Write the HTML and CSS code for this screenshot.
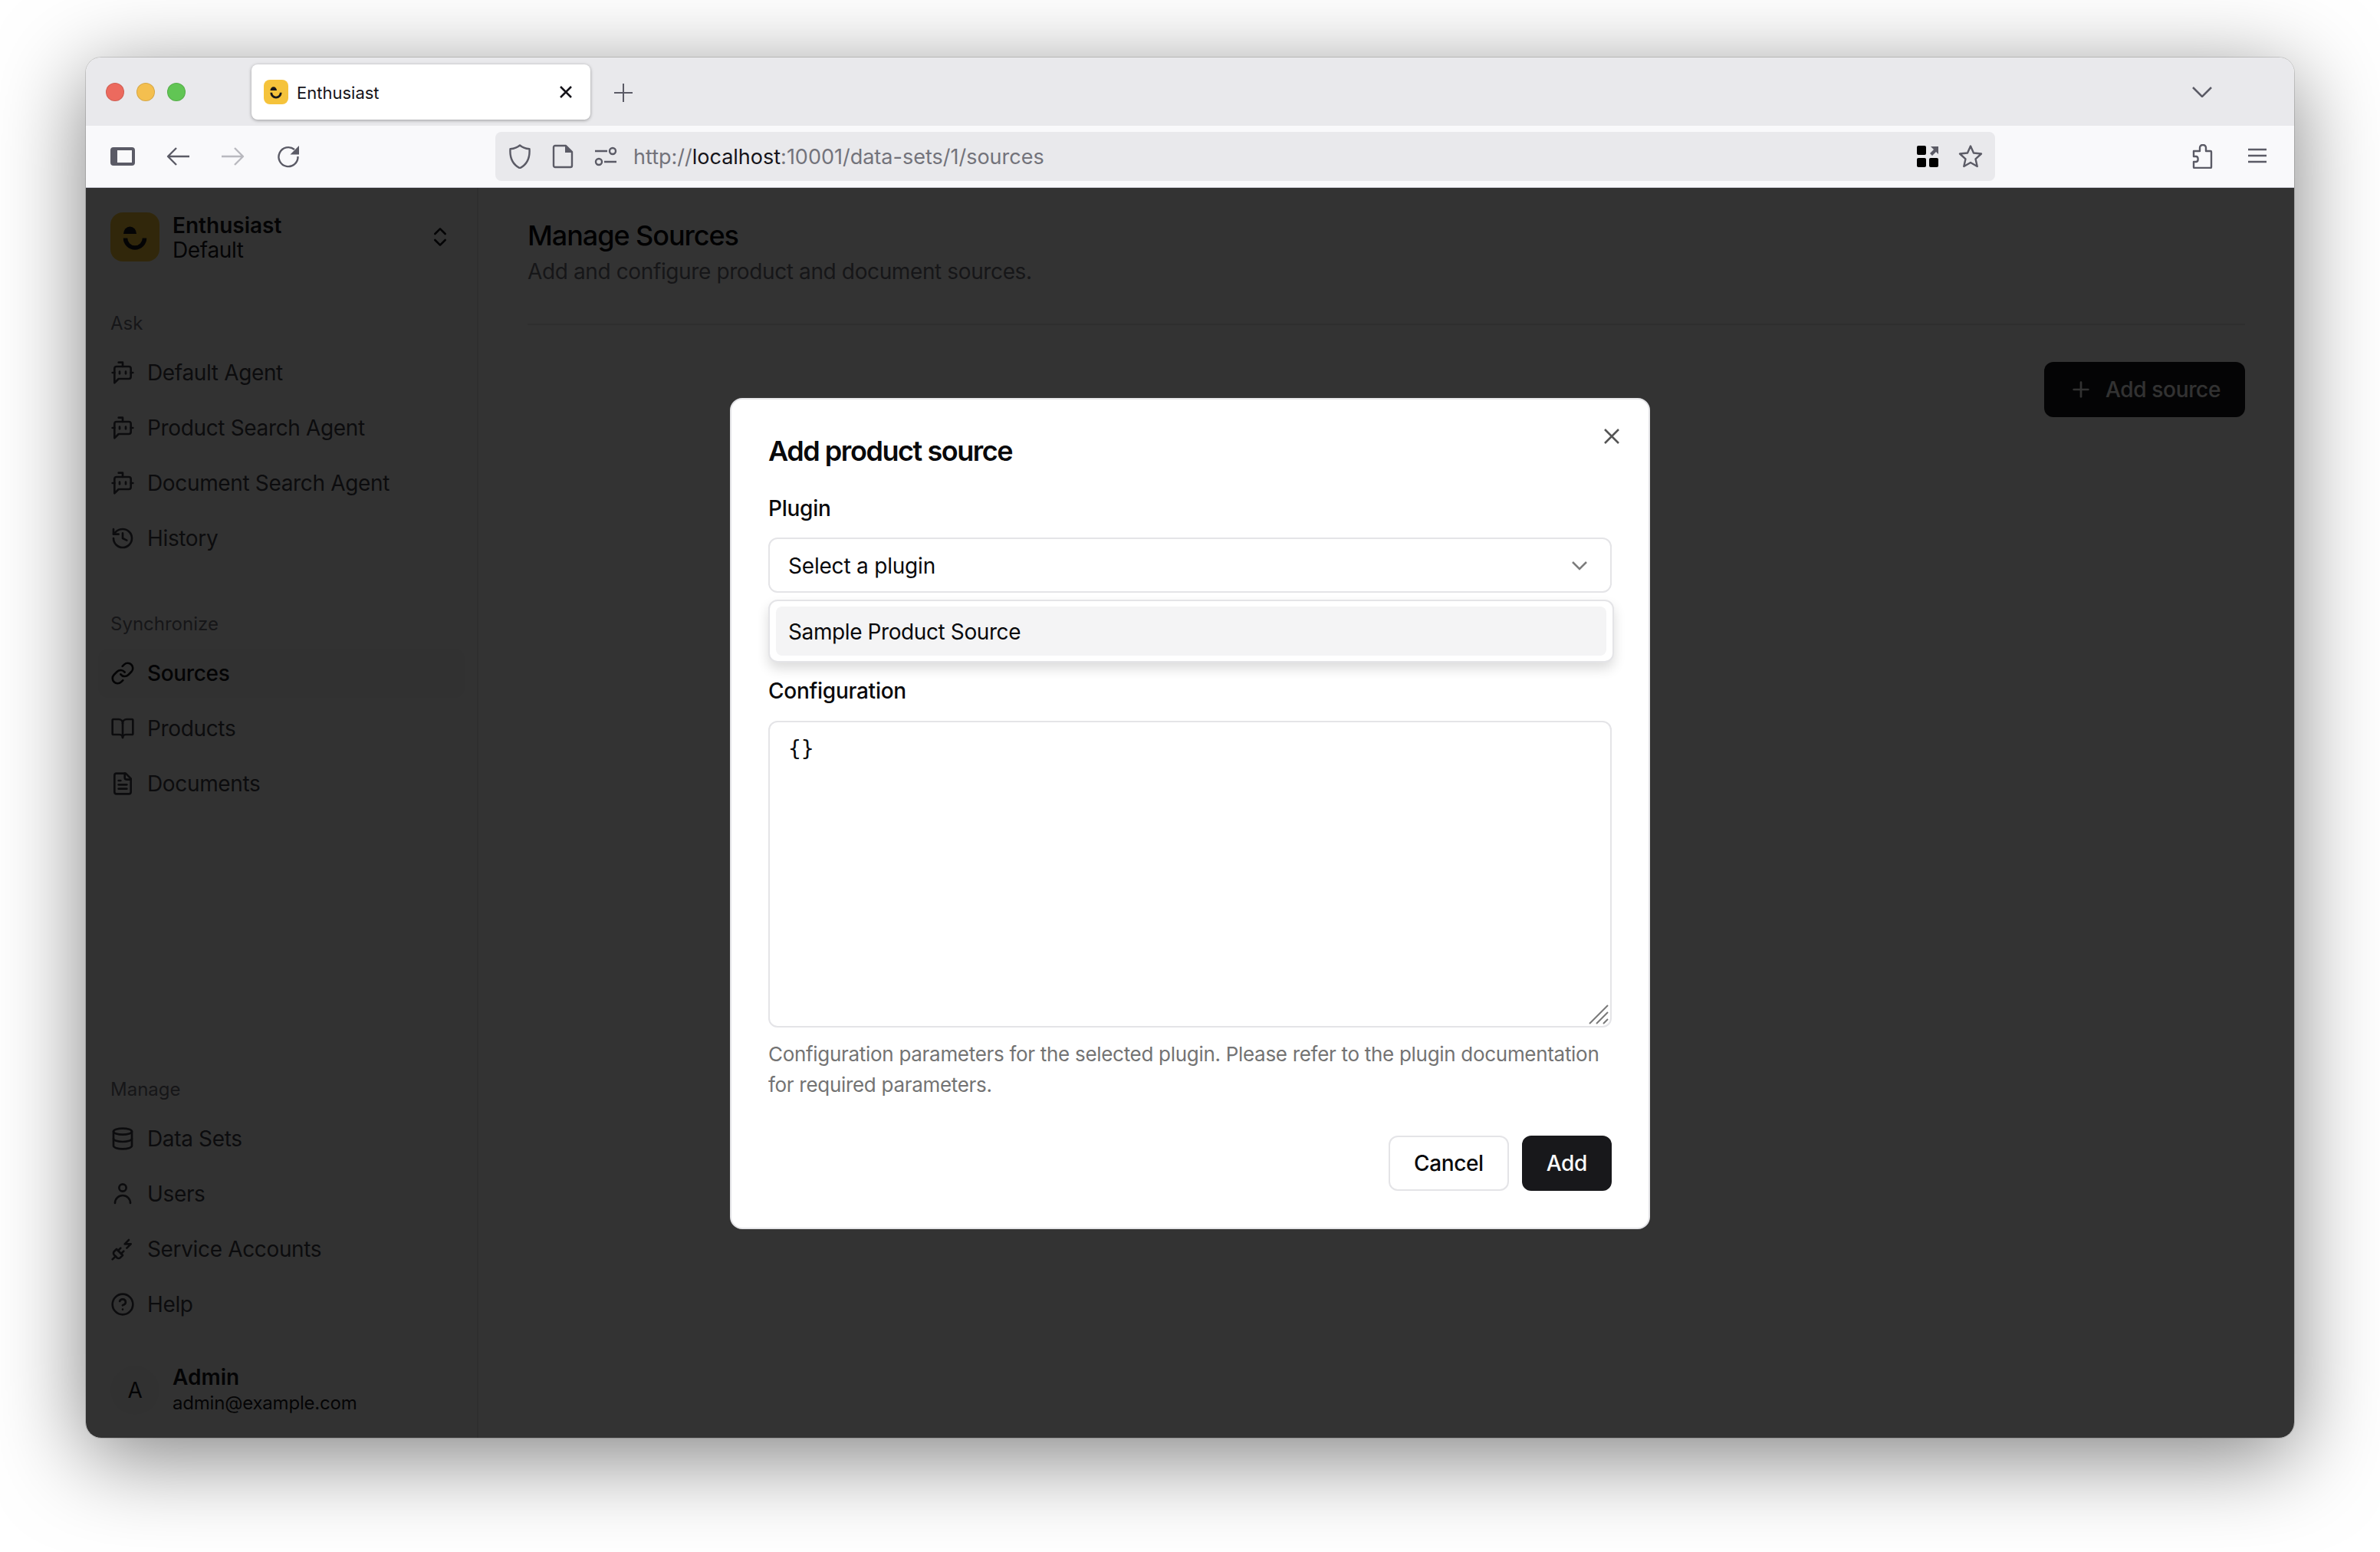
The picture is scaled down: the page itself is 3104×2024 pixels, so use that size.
FILE: index.html
```html
<!DOCTYPE html>
<html lang="en">
<head>
<meta charset="utf-8">
<title>Enthusiast</title>
<link rel="stylesheet" href="styles.css">
</head>
<body>
<svg class="defs" width="0" height="0" aria-hidden="true">
  <symbol id="logo" viewBox="0 0 64 64">
    <rect width="64" height="64" rx="16" fill="#f5c33b"/>
    <path d="M17 28a8.5 9.5 0 0 1 17 0z" fill="#18181b"/>
    <path d="M19.5 33.500a12.500 12.500 0 0 0 25 0" fill="none" stroke="#18181b" stroke-width="5.500"/>
  </symbol>
  <symbol id="bot" viewBox="0 0 24 24"><path d="M12 6V2H8"/><path d="m8 18-4 4V8a2 2 0 0 1 2-2h12a2 2 0 0 1 2 2v8a2 2 0 0 1-2 2Z"/><path d="M2 12h2"/><path d="M9 11v2"/><path d="M15 11v2"/><path d="M20 12h2"/></symbol>
</svg>
<div class="window">
  <div class="tabbar">
    <div class="lights">
      <span class="light red"></span><span class="light amber"></span><span class="light green"></span>
    </div>
    <div class="tab">
      <svg class="favicon"><use href="#logo"/></svg>
      <span class="tab-title">Enthusiast</span>
      <svg class="tab-close" viewBox="0 0 18 18"><path d="M2 2l14 14M16 2L2 16"/></svg>
    </div>
    <svg class="new-tab" viewBox="0 0 24 24"><path d="M12 0v24M0 12h24"/></svg>
    <svg class="tab-list" viewBox="0 0 26 14"><path d="M1 1l12 12L25 1"/></svg>
  </div>
  <div class="toolbar">
    <span class="slot"><svg class="chrome-ico" viewBox="0 0 32 32"><rect x="2" y="6" width="28" height="20" rx="2" class="thick"/><rect x="2" y="6" width="7" height="20" class="solid"/></svg></span>
    <span class="slot"><svg class="chrome-ico" viewBox="0 0 32 32"><path d="M31 16H3M14 5L3 16l11 11"/></svg></span>
    <span class="slot"><svg class="chrome-ico faded" viewBox="0 0 32 32"><path d="M1 16h28M18 5l11 11-11 11"/></svg></span>
    <span class="slot"><svg class="chrome-ico" viewBox="0 0 32 32"><path d="M24 7A12.500 12.500 0 1 0 28.500 16"/><path class="solid" d="M30 2v11.500H18.500z"/></svg></span>
    <div class="urlbar">
      <span class="url-slot"><svg class="chrome-ico" viewBox="0 0 32 32"><path d="M16 1.500c3 2.600 7.200 4.200 12.500 4.800.7 10.500-3 20.200-12.500 25-9.500-4.800-13.200-14.500-12.500-25C8.800 5.700 13 4.100 16 1.500z"/></svg></span>
      <span class="url-slot"><svg class="chrome-ico" viewBox="0 0 32 32"><path d="M6 2h14l8 8v18a2 2 0 0 1-2 2H6a2 2 0 0 1-2-2V4a2 2 0 0 1 2-2z"/><path class="solid" d="M19 2l9 9h-9z"/></svg></span>
      <span class="url-slot"><svg class="chrome-ico" viewBox="0 0 32 32"><path d="M2 9h16M14 23h16"/><circle cx="25" cy="9" r="4"/><circle cx="7" cy="23" r="4"/></svg></span>
      <span class="url"><span class="url-dim">http://</span>localhost<span class="url-dim">:10001/data-sets/1/sources</span></span>
      <span class="url-slot"><svg class="grid-ico" viewBox="0 0 28 28"><rect x="0" y="0" width="12" height="12" rx="2"/><rect x="0" y="16" width="12" height="12" rx="2"/><rect x="16" y="16" width="12" height="12" rx="2"/><path class="grid-arrow" d="M18 1h10v10l-3-3-5 5-3-3 5-5z"/></svg></span>
      <span class="url-slot"><svg class="chrome-ico" viewBox="0 0 32 32"><path d="M16 2.500l4 9 10 1-7.500 6.800 2.200 9.700L16 24l-8.700 5 2.200-9.700L2 12.500l10-1z"/></svg></span>
    </div>
    <span class="slot"><svg class="chrome-ico" viewBox="0 0 32 32"><path d="M16 1c-3 0-4 2-4 4v4H4v7h3c3.500 0 3.500 7 0 7H4v7a1 1 0 0 0 1 1h21a1 1 0 0 0 1-1V10a1 1 0 0 0-1-1h-6V5c0-2-1-4-4-4z"/></svg></span>
    <span class="slot"><svg class="chrome-ico" viewBox="0 0 32 32"><path d="M3 7h24M3 15h24M3 23h24"/></svg></span>
  </div>
  <div class="app">
    <aside class="sidebar">
      <div class="brand">
        <svg class="brand-logo"><use href="#logo"/></svg>
        <div class="two-line">
          <span class="strong">Enthusiast</span>
          <span>Default</span>
        </div>
        <svg class="ico brand-switch" viewBox="0 0 24 24"><path d="m7 15 5 5 5-5"/><path d="m7 9 5-5 5 5"/></svg>
      </div>
      <nav class="group first">
        <div class="group-label">Ask</div>
        <a class="item"><svg class="ico" viewBox="0 0 24 24"><use href="#bot"/></svg>Default Agent</a>
        <a class="item"><svg class="ico" viewBox="0 0 24 24"><use href="#bot"/></svg>Product Search Agent</a>
        <a class="item"><svg class="ico" viewBox="0 0 24 24"><use href="#bot"/></svg>Document Search Agent</a>
        <a class="item"><svg class="ico" viewBox="0 0 24 24"><path d="M3 12a9 9 0 1 0 9-9 9.750 9.750 0 0 0-6.740 2.740L3 8"/><path d="M3 3v5h5"/><path d="M12 7v5l4 2"/></svg>History</a>
      </nav>
      <nav class="group">
        <div class="group-label">Synchronize</div>
        <a class="item active"><svg class="ico" viewBox="0 0 24 24"><path d="M10 13a5 5 0 0 0 7.540.540l3-3a5 5 0 0 0-7.070-7.070l-1.720 1.710"/><path d="M14 11a5 5 0 0 0-7.540-.540l-3 3a5 5 0 0 0 7.070 7.070l1.710-1.710"/></svg>Sources</a>
        <a class="item"><svg class="ico" viewBox="0 0 24 24"><path d="M12 7v14"/><path d="M3 18a1 1 0 0 1-1-1V4a1 1 0 0 1 1-1h5a4 4 0 0 1 4 4 4 4 0 0 1 4-4h5a1 1 0 0 1 1 1v13a1 1 0 0 1-1 1h-6a3 3 0 0 0-3 3 3 3 0 0 0-3-3z"/></svg>Products</a>
        <a class="item"><svg class="ico" viewBox="0 0 24 24"><path d="M15 2H6a2 2 0 0 0-2 2v16a2 2 0 0 0 2 2h12a2 2 0 0 0 2-2V7Z"/><path d="M14 2v4a2 2 0 0 0 2 2h4"/><path d="M10 9H8"/><path d="M16 13H8"/><path d="M16 17H8"/></svg>Documents</a>
      </nav>
      <nav class="group push">
        <div class="group-label">Manage</div>
        <a class="item"><svg class="ico" viewBox="0 0 24 24"><ellipse cx="12" cy="5" rx="9" ry="3"/><path d="M3 5V19A9 3 0 0 0 21 19V5"/><path d="M3 12A9 3 0 0 0 21 12"/></svg>Data Sets</a>
        <a class="item"><svg class="ico" viewBox="0 0 24 24"><circle cx="12" cy="6" r="3.500"/><path d="M4.500 21a7.500 7.500 0 0 1 15 0"/></svg>Users</a>
        <a class="item"><svg class="ico" viewBox="0 0 24 24"><path d="M6.300 20.300a2.400 2.400 0 0 0 3.400 0L12 18l-6-6-2.300 2.300a2.400 2.400 0 0 0 0 3.400Z"/><path d="m2 22 3-3"/><path d="M7.500 13.500 10 11"/><path d="M10.500 16.500 13 14"/><path d="m18 3-4 4h6l-4 4"/></svg>Service Accounts</a>
        <a class="item"><svg class="ico" viewBox="0 0 24 24"><circle cx="12" cy="12" r="10"/><path d="M9.090 9a3 3 0 0 1 5.830 1c0 2-3 3-3 3"/><path d="M12 17h.010"/></svg>Help</a>
      </nav>
      <div class="account">
        <span class="avatar">A</span>
        <div class="two-line">
          <span class="strong">Admin</span>
          <span class="small">admin@example.com</span>
        </div>
      </div>
    </aside>
    <main class="main">
      <h1 class="page-title">Manage Sources</h1>
      <p class="page-sub">Add and configure product and document sources.</p>
      <hr class="rule">
      <div class="actions">
        <button class="btn btn-dark btn-icon"><svg class="ico" viewBox="0 0 24 24"><path d="M5 12h14"/><path d="M12 5v14"/></svg>Add source</button>
      </div>
    </main>
    <div class="overlay">
      <section class="dialog">
        <svg class="dialog-close" viewBox="0 0 20 20"><path d="M1 1l18 18M19 1L1 19"/></svg>
        <h2 class="dialog-title">Add product source</h2>
        <label class="field-label plugin-label">Plugin</label>
        <div class="select">
          <span>Select a plugin</span>
          <svg class="select-chevron" viewBox="0 0 20 12"><path d="M1 1l9 9 9-9"/></svg>
          <div class="menu"><div class="menu-item">Sample Product Source</div></div>
        </div>
        <label class="field-label config-label">Configuration</label>
        <div class="textarea">{}
          <svg class="grip" viewBox="0 0 26 26"><path d="M1 25L25 1M10 25L25 10M19 25l6-6"/></svg>
        </div>
        <p class="help">Configuration parameters for the selected plugin. Please refer to the plugin documentation for required parameters.</p>
        <div class="dialog-footer">
          <button class="btn btn-outline">Cancel</button>
          <button class="btn btn-dark">Add</button>
        </div>
      </section>
    </div>
  </div>
</div>
</body>
</html>
```
FILE: styles.css
```css
* { box-sizing: border-box; }
html, body { margin: 0; padding: 0; }
body {
  width: 3104px;
  height: 2024px;
  background: #fff;
  padding: 75px 112px 0;
  font-family: Inter, "Liberation Sans", sans-serif;
  color: #18181b;
  overflow: hidden;
}
.defs { position: absolute; }

.window {
  width: 2880px;
  height: 1800px;
  border-radius: 20px;
  overflow: hidden;
  display: flex;
  flex-direction: column;
  box-shadow: 0 0 0 1px rgba(0,0,0,.14), 0 24px 115px rgba(0,0,0,.5);
}

/* browser chrome */
.tabbar {
  height: 89px;
  flex: none;
  background: #e9e9ec;
  display: flex;
  align-items: flex-start;
  padding: 9px 0 0 26px;
}
.lights { display: flex; gap: 16px; margin-top: 24px; }
.light { width: 24px; height: 24px; border-radius: 50%; border: 1px solid rgba(0,0,0,.12); }
.red { background: #ec6a5e; }
.amber { background: #f4bf4f; }
.green { background: #61c554; }
.tab {
  width: 442px;
  height: 72px;
  margin-left: 86px;
  background: #fff;
  border-radius: 8px;
  box-shadow: 0 1px 4px rgba(0,0,0,.35);
  display: flex;
  align-items: center;
  padding: 0 23px 0 16px;
}
.favicon { width: 32px; height: 32px; flex: none; }
.tab-title { margin-left: 11px; font-size: 22px; padding-top: 1px; color: #15141a; flex: 1; }
.tab-close { width: 18px; height: 18px; fill: none; stroke: #15141a; stroke-width: 2.500; }
.new-tab { width: 24px; height: 24px; margin: 25px 0 0 31px; fill: none; stroke: #5b5b66; stroke-width: 2; }
.tab-list { width: 26px; height: 14px; margin: 29px 0 0 auto; margin-right: 107px; fill: none; stroke: #5b5b66; stroke-width: 2.500; }

.toolbar {
  height: 81px;
  flex: none;
  background: #f9f9fb;
  border-bottom: 1px solid #cfcfd8;
  display: flex;
  align-items: center;
  padding: 0 11px 0 12px;
}
.slot { width: 72px; height: 64px; flex: none; display: flex; align-items: center; justify-content: center; }
.chrome-ico { width: 32px; height: 32px; fill: none; stroke: #5b5b66; stroke-width: 2.400; stroke-linejoin: round; }
.chrome-ico .solid { fill: #5b5b66; stroke: none; }
.chrome-ico .thick { stroke-width: 4; }
.chrome-ico.faded { stroke: #b9b9bf; }
.urlbar {
  flex: 1;
  height: 64px;
  margin: 0 235px 0 234px;
  background: #e9e9ec;
  border-radius: 8px;
  display: flex;
  align-items: center;
  padding: 0 4px;
}
.url-slot { width: 56px; height: 64px; flex: none; display: flex; align-items: center; justify-content: center; }
.url { flex: 1; margin-left: 8px; padding-top: 1px; font-size: 27px; color: #15141a; }
.url-dim { color: #73737b; }
.grid-ico { width: 28px; height: 28px; fill: #000; }
.grid-arrow { fill: #5b5b66; }

/* app */
.app { position: relative; flex: 1; min-height: 0; display: flex; background: #fff; }
.sidebar {
  width: 512px;
  flex: none;
  background: #fafafa;
  border-right: 2px solid #e4e4e7;
  display: flex;
  flex-direction: column;
  padding: 32px 16px 30px;
  font-size: 28px;
  letter-spacing: -.35px;
}
.brand { display: flex; align-items: center; height: 64px; padding-left: 16px; }
.brand-logo { width: 64px; height: 64px; flex: none; }
.two-line { display: flex; flex-direction: column; line-height: 32px; margin-left: 17px; flex: 1; padding-top: 2px; }
.strong { font-weight: 600; letter-spacing: 0; }
.small { font-size: 24px; line-height: 36px; letter-spacing: -.2px; }
.brand-switch { margin-right: 16px; }
.ico { width: 32px; height: 32px; flex: none; fill: none; stroke: currentColor; stroke-width: 2; stroke-linecap: round; stroke-linejoin: round; }
.group { display: flex; flex-direction: column; gap: 8px; margin-top: 49px; }
.group + .group { margin-top: 48px; }
.group.push { margin-top: auto; }
.group-label { height: 64px; margin-bottom: -8px; padding-left: 16px; font-size: 24px; line-height: 64px; letter-spacing: 0; color: #71717a; }
.item { display: flex; align-items: center; gap: 16px; height: 64px; padding-left: 16px; border-radius: 12px; color: #3f3f46; }
.item.active { background: #f4f4f5; color: #18181b; font-weight: 500; }
.account { display: flex; align-items: center; height: 64px; margin-top: 48px; padding-left: 16px; }
.avatar { width: 64px; height: 64px; flex: none; border-radius: 50%; background: #f4f4f5; display: flex; align-items: center; justify-content: center; }

.main { flex: 1; min-width: 0; padding: 34px 64px 0; }
.page-title { margin: 0; font-size: 36px; line-height: 56px; font-weight: 500; letter-spacing: -1.05px; color: #09090b; }
.page-sub { margin: -1px 0 0; font-size: 28px; line-height: 40px; letter-spacing: -.38px; color: #71717a; }
.rule { margin: 48px 0 48px; border: 0; border-top: 2px solid #e4e4e7; }
.actions { display: flex; justify-content: flex-end; }

.btn {
  height: 72px;
  border-radius: 12px;
  padding: 0 32px;
  font: 500 28px Inter, "Liberation Sans", sans-serif;
  letter-spacing: -.35px;
  display: inline-flex;
  align-items: center;
}
.btn-outline { padding: 0 31px; }
.btn-dark { background: #18181b; color: #fafafa; border: 0; }
.btn-icon { gap: 16px; }
.btn-outline { background: #fff; color: #09090b; border: 2px solid #e4e4e7; }

/* modal */
.overlay {
  position: absolute;
  inset: 0;
  background: rgba(0,0,0,.8);
  display: flex;
  align-items: center;
  justify-content: center;
  padding-top: 2px;
}
.dialog {
  position: relative;
  width: 1200px;
  height: 1084px;
  background: #fff;
  border: 2px solid #e4e4e7;
  border-radius: 16px;
  padding: 47px 48px 48px;
  display: flex;
  flex-direction: column;
}
.dialog-close { position: absolute; top: 38px; right: 38px; width: 20px; height: 20px; fill: none; stroke: #555; stroke-width: 2.500; }
.dialog-title { margin: 0; font-size: 36px; line-height: 40px; font-weight: 600; letter-spacing: -1.45px; color: #09090b; }
.field-label { display: block; font-size: 28px; line-height: 28px; font-weight: 500; letter-spacing: -.25px; color: #09090b; }
.plugin-label { margin-top: 41px; }
.select {
  position: relative;
  margin-top: 24px;
  height: 72px;
  flex: none;
  border: 2px solid #e4e4e7;
  border-radius: 12px;
  padding: 2px 24px 0;
  display: flex;
  align-items: center;
  justify-content: space-between;
  font-size: 28px;
  letter-spacing: -.2px;
  color: #09090b;
}
.select-chevron { width: 20px; height: 12px; margin-right: 6px; fill: none; stroke: #7c7c7c; stroke-width: 2.500; }
.menu {
  position: absolute;
  top: 79px;
  left: -2px;
  right: -5px;
  height: 82px;
  background: #fff;
  border: 2px solid #e4e4e7;
  border-radius: 12px;
  padding: 7px 8px;
  box-shadow: 0 8px 16px rgba(0,0,0,.14);
}
.menu-item { height: 64px; border-radius: 8px; background: #f4f4f5; padding: 1px 0 0 16px; display: flex; align-items: center; letter-spacing: -.4px; }
.config-label { margin-top: 114px; }
.textarea {
  position: relative;
  margin-top: 25px;
  height: 400px;
  flex: none;
  border: 2px solid #e4e4e7;
  border-radius: 12px;
  padding: 15px 24px;
  font: 28px/40px "DejaVu Sans Mono", "Liberation Mono", monospace;
  color: #09090b;
}
.grip { position: absolute; right: 2px; bottom: 2px; width: 26px; height: 26px; fill: none; stroke: #7a7a7a; stroke-width: 2; }
.help { margin: 15px 0 0; font-size: 26px; line-height: 40px; letter-spacing: -.3px; color: #737373; }
.dialog-footer { display: flex; justify-content: flex-end; gap: 17px; margin-top: auto; }
```
